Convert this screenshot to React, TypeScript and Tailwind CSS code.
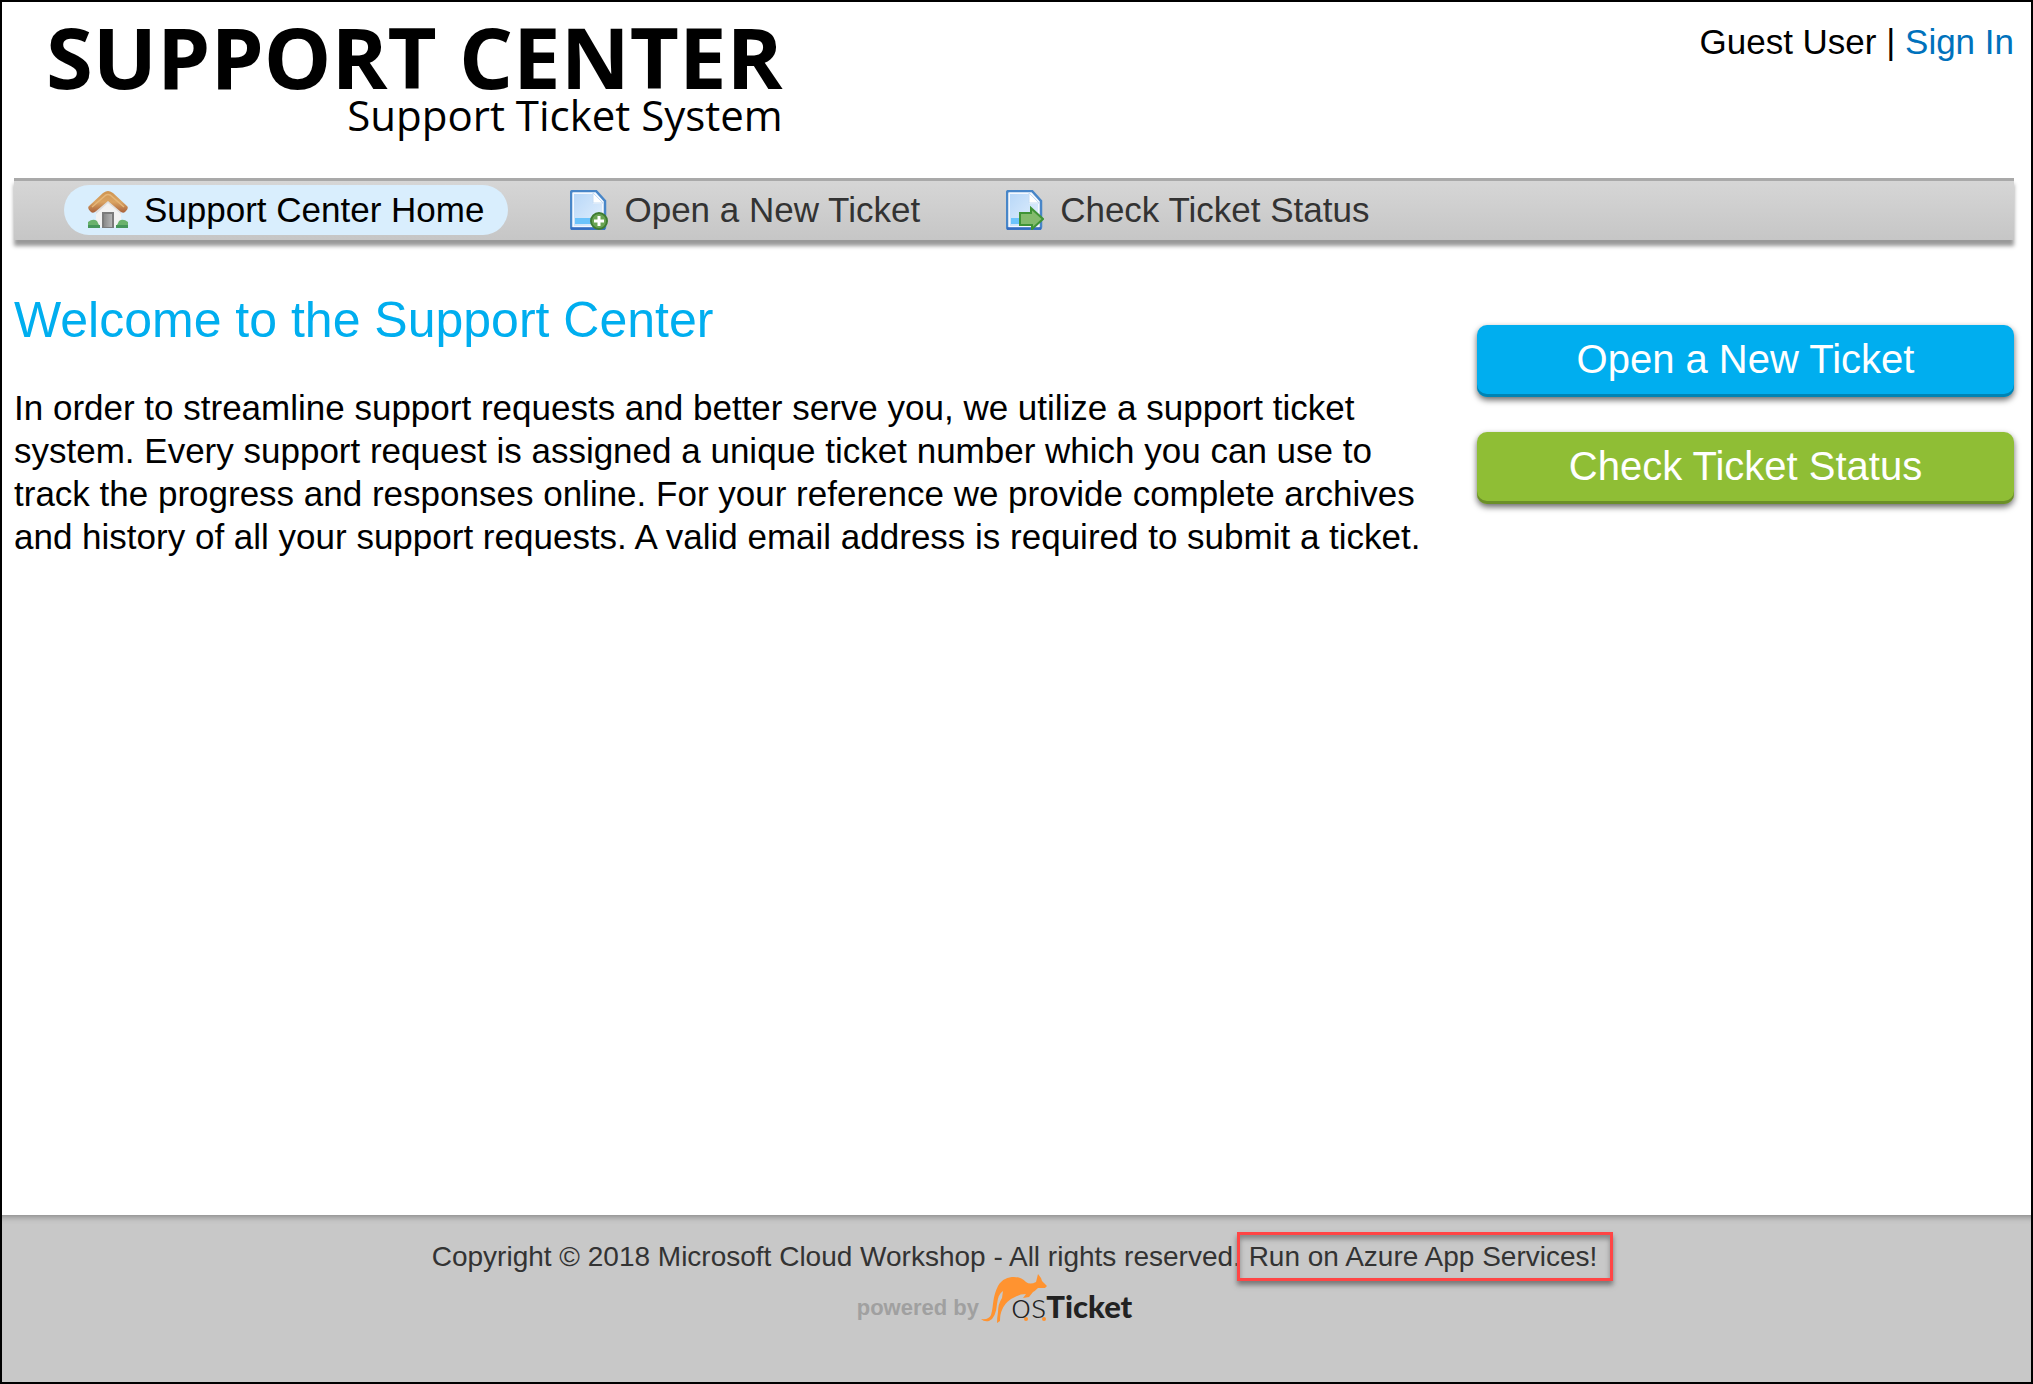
import React from "react";

function HomeIcon() {
  return (
    <svg width="40" height="40" viewBox="0 0 40 40" aria-hidden="true">
      <defs>
        <linearGradient id="roof" x1="0" y1="0" x2="0" y2="1">
          <stop offset="0" stopColor="#cf9450" />
          <stop offset="0.5" stopColor="#daa463" />
          <stop offset="1" stopColor="#a8603a" />
        </linearGradient>
        <linearGradient id="door" x1="0" y1="0" x2="1" y2="0">
          <stop offset="0" stopColor="#8a8a8a" />
          <stop offset="1" stopColor="#b5b5b5" />
        </linearGradient>
      </defs>
      <path d="M8 20 20 9 33 20V37H8Z" fill="#f2f2f2" />
      <path d="M8 20 20 9 33 20V24L20 13 8 24Z" fill="#dedede" />
      <path d="M0 32Q5 28 9 31L12 37H0ZM40 32Q35 28 31 31L28 37H40Z" fill="#6ab26c" />
      <path d="M0 35H12V38H0ZM28 35H40V38H28Z" fill="#46965a" />
      <path d="M14 22H26V38H14Z" fill="#7b7b7b" />
      <path d="M16 24H24V37H16Z" fill="url(#door)" />
      <path d="M20 1Q22 1 25 3L39 16Q41 18 38 21Q36 24 33 22L20 11 7 22Q4 24 2 21Q-1 18 1 16L15 3Q18 1 20 1Z" fill="url(#roof)" />
      <path d="M4 17 18 5Q20 4 22 5L36 17" fill="none" stroke="#e5b678" strokeWidth="1.5" />
    </svg>
  );
}

function PageShape({ id }: { id: string }) {
  return (
    <>
      <defs>
        <linearGradient id={id} x1="0" y1="0" x2="1" y2="1">
          <stop offset="0" stopColor="#b9d8f8" />
          <stop offset="1" stopColor="#e2effd" />
        </linearGradient>
      </defs>
      <path d="M3 1H26L35 11V37Q35 39 33 39H3Q1 39 1 37V3Q1 1 3 1Z" fill="#f4f9ff" stroke="#4886c8" strokeWidth="2.5" />
      <path d="M4 4H23V14H32V36H4Z" fill={`url(#${id})`} />
      <path d="M23 3V13H33Z" fill="#fff" stroke="#c5dcf4" strokeWidth="1" />
      <path d="M1 38.5H35" stroke="#356cc0" strokeWidth="2.5" />
      <path d="M5 28H23V34H5Z" fill="#6cc3fb" />
    </>
  );
}

function NewIcon() {
  return (
    <svg width="38" height="40" viewBox="0 0 38 40" aria-hidden="true">
      <PageShape id="pageNew" />
      <circle cx="29" cy="31" r="8" fill="#6aa453" stroke="#3f7c31" strokeWidth="2" />
      <path d="M29 26V36M24 31H34" stroke="#fff" strokeWidth="3" />
    </svg>
  );
}

function StatusIcon() {
  return (
    <svg width="38" height="40" viewBox="0 0 38 40" aria-hidden="true">
      <PageShape id="pageStatus" />
      <path d="M14 23H25V18L37 29 26 39V35H14Z" fill="#83bb6d" stroke="#3f9436" strokeWidth="2" />
    </svg>
  );
}

function Kangaroo() {
  return (
    <svg width="66" height="50" viewBox="0 0 66 50" aria-hidden="true">
      <path
        d="M0 45Q8 46 10 41C13 31 11 24 17 12C21 5 27 3 33 3Q40 3 45 8Q49 11 55 8L57 0 60 4 61 7 66 12 64 14 57 14Q54 17 52 18L48 23 42 24 45 20Q39 20 34 23L30 25Q23 30 21 36Q19 40 19 47L16 49Q16 44 17 38Q17 30 21 24L22 17Q17 20 16 30Q15 44 8 47Q3 48 0 45Z"
        fill="#ff9330"
      />
      <circle cx="45" cy="45" r="2" fill="#ff9330" />
      <circle cx="63" cy="45" r="2" fill="#ff9330" />
    </svg>
  );
}

const navItems = [
  { label: "Support Center Home", Icon: HomeIcon, active: true },
  { label: "Open a New Ticket", Icon: NewIcon, active: false },
  { label: "Check Ticket Status", Icon: StatusIcon, active: false },
];

export default function App() {
  return (
    <div className="flex min-h-screen flex-col border-2 border-black bg-white font-['Liberation_Sans',Arial,sans-serif] text-[35px] leading-[43px] text-black">
      <header className="flex items-start justify-between pt-4 pr-[17px] pl-3">
        <a href="#home" className="ml-8 flex h-40 flex-col items-end font-['Open_Sans',sans-serif]">
          <span className="text-[85px] leading-[76px] font-bold">SUPPORT CENTER</span>
          <span className="text-[42px] leading-[42px]">Support Ticket System</span>
        </a>
        <p className="pt-0.5">
          Guest User | <a href="#signin" className="text-[#0072bc]">Sign In</a>
        </p>
      </header>

      <nav className="mr-[17px] ml-3 flex h-[62px] items-center gap-[38px] border-t-3 border-[#a9a9a9] bg-linear-to-b from-[#d6d6d6] to-[#c6c6c6] pb-0.5 pl-[50px] shadow-[0_6px_4px_#999]">
        {navItems.map(({ label, Icon, active }) => (
          <a
            key={label}
            href="#nav"
            className={
              active
                ? "flex h-[50px] items-center gap-4 rounded-full bg-[#d9eefd] px-6 text-black"
                : "flex h-[50px] items-center gap-4 rounded-full px-6 text-[#333]"
            }
          >
            <Icon />
            {label}
          </a>
        ))}
      </nav>

      <main className="flex flex-1 items-start justify-between pt-[50px] pr-[17px] pl-3">
        <section className="w-[1430px]">
          <h1 className="text-[50px] leading-[60px] text-[#00aeef]">Welcome to the Support Center</h1>
          <p className="mt-9">
            In order to streamline support requests and better serve you, we utilize a support ticket system. Every
            support request is assigned a unique ticket number which you can use to track the progress and responses
            online. For your reference we provide complete archives and history of all your support requests. A valid
            email address is required to submit a ticket.
          </p>
        </section>
        <aside className="flex w-[537px] flex-col gap-[35px] pt-[35px] text-[40px] text-white text-shadow-[0_-2px_2px_rgb(0_0_0/0.25)]">
          <button className="h-[72px] rounded-[10px] bg-[#00aeef] pb-1 shadow-[inset_0_-3px_0_#0083b3,0_3px_6px_rgb(0_0_0/0.6)]">
            Open a New Ticket
          </button>
          <button className="h-[72px] rounded-[10px] bg-[#8fbe35] pb-1 shadow-[inset_0_-3px_0_#6b8f28,0_3px_6px_rgb(0_0_0/0.6)]">
            Check Ticket Status
          </button>
        </aside>
      </main>

      <footer className="flex h-[167px] flex-col items-center bg-[#c8c8c8] pt-5 pr-1 text-[28px] text-[#333] shadow-[inset_0_8px_6px_-6px_#888]">
        <p>
          Copyright © 2018 Microsoft Cloud Workshop - All rights reserved.{" "}
          <span className="relative">
            Run on Azure App Services!
            <span className="absolute -top-[9px] -right-4 -bottom-[9px] -left-3 border-3 border-[#ff4545] shadow-[0_4px_5px_#777,inset_0_4px_5px_#888]" />
          </span>
        </p>
        <a href="#osticket" className="mr-10 -mt-1 flex items-end">
          <span className="text-[22px] leading-8 font-bold text-[#a0a0a0]">powered by</span>
          <span className="ml-0.5">
            <Kangaroo />
          </span>
          <span className="-ml-9 font-[Lato,sans-serif] text-[36px] leading-9 font-light text-[#222]">
            os<b className="text-[31px] font-black">Ticket</b>
          </span>
        </a>
      </footer>
    </div>
  );
}
